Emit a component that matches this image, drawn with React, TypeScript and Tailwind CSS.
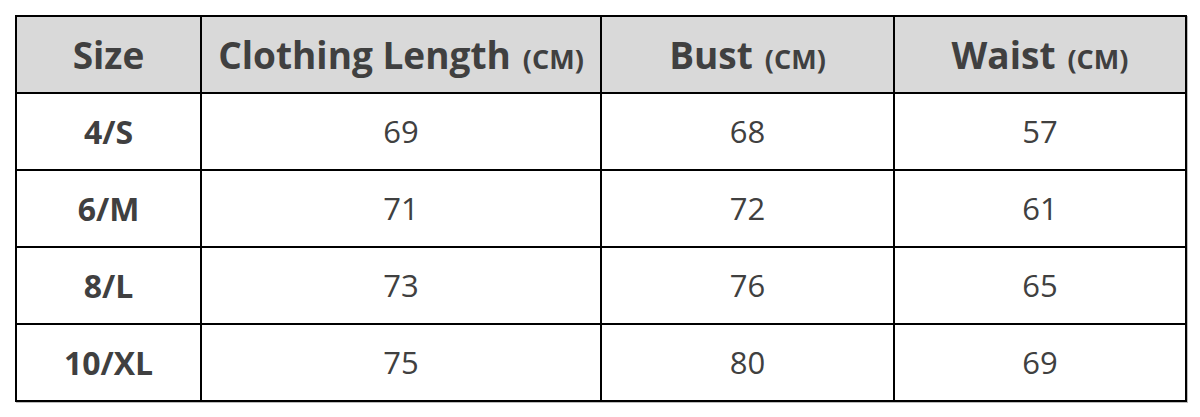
const rows = [
  ["4/S", "69", "68", "57"],
  ["6/M", "71", "72", "61"],
  ["8/L", "73", "76", "65"],
  ["10/XL", "75", "80", "69"],
];

function Head({ label, unit }: { label: string; unit?: string }) {
  return (
    <th className="border-2 border-black bg-[#d9d9d9] p-0 text-center align-middle text-[37px] font-bold leading-none text-[#404040]">
      {label}
      {unit && <span className="ml-[12px] text-[27px]">{unit}</span>}
    </th>
  );
}

export default function App() {
  return (
    <div className="h-[417px] w-[1200px] bg-white pl-[15px] pt-[15px] font-['Open_Sans',sans-serif]">
      <table className="w-[1170px] table-fixed border-collapse border-2 border-black shadow-[1px_1px_0_#bbb]">
        <colgroup>
          <col className="w-[185px]" />
          <col className="w-[400px]" />
          <col className="w-[293px]" />
          <col className="w-[292px]" />
        </colgroup>
        <thead>
          <tr className="h-[77px]">
            <Head label="Size" />
            <Head label="Clothing Length" unit="(CM)" />
            <Head label="Bust" unit="(CM)" />
            <Head label="Waist" unit="(CM)" />
          </tr>
        </thead>
        <tbody>
          {rows.map((r) => (
            <tr key={r[0]} className="h-[77px]">
              <td className="border-2 border-black p-0 text-center align-middle text-[32px] font-bold leading-none text-[#404040]">
                {r[0]}
              </td>
              {r.slice(1).map((v, i) => (
                <td
                  key={i}
                  className="border-2 border-black p-0 text-center align-middle text-[31px] font-normal leading-none text-[#404040]"
                >
                  {v}
                </td>
              ))}
            </tr>
          ))}
        </tbody>
      </table>
    </div>
  );
}
